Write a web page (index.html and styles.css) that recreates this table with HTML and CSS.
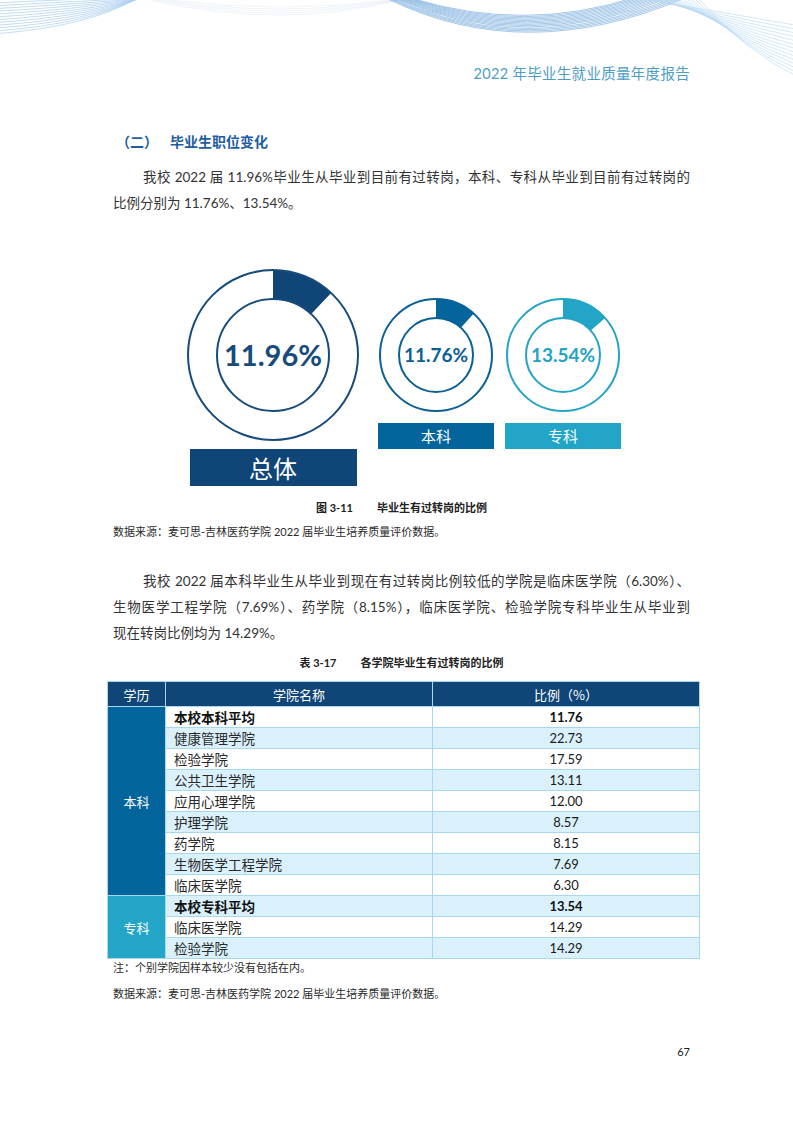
FILE: index.html
```html
<!DOCTYPE html>
<html lang="zh-CN">
<head>
<meta charset="utf-8">
<title>2022 年毕业生就业质量年度报告</title>
<link rel="stylesheet" href="styles.css">
</head>
<body>
<div class="page">
  <header class="top">
    <svg class="waves" width="793" height="90" viewBox="0 0 793 90" aria-hidden="true">
      <g class="w-left" fill="none">
        <path d="M-5 3 Q90 -2 148 -2"/>
        <path d="M-5 5.8 Q90 0.6 147 -2"/>
        <path d="M-5 8.6 Q90 3.2 146 -2"/>
        <path d="M-5 11.4 Q90 5.8 145 -2"/>
        <path d="M-5 14.2 Q90 8.4 144 -2"/>
        <path d="M-5 17 Q90 11 143 -2"/>
        <path d="M-5 19.8 Q90 13.6 142 -2"/>
        <path d="M-5 22.6 Q90 16.2 141 -2"/>
        <path d="M-5 25.4 Q90 18.8 140 -2"/>
        <path d="M-5 28.2 Q90 21.4 139 -2"/>
        <path d="M-5 31 Q90 24 138 -2"/>
        <path d="M-5 33.8 Q90 26.6 137 -2"/>
      </g>
      <g class="w-faint" fill="none">
        <path d="M150 0 Q280 30 400 0"/>
        <path d="M155 0 Q280 26 398 0"/>
        <path d="M160 0 Q280 22 396 0"/>
        <path d="M165 0 Q280 18 394 0"/>
        <path d="M170 0 Q280 14 392 0"/>
      </g>
      <g class="w-mid" fill="none">
        <path d="M388 -1 Q525 66 685 -2"/>
        <path d="M390 -1 Q525 63.4 681 -2"/>
        <path d="M392 -1 Q525 60.8 677 -2"/>
        <path d="M394 -1 Q525 58.2 673 -2"/>
        <path d="M396 -1 Q525 55.6 669 -2"/>
        <path d="M398 -1 Q525 53 665 -2"/>
        <path d="M400 -1 Q525 50.4 661 -2"/>
        <path d="M402 -1 Q525 47.8 657 -2"/>
        <path d="M404 -1 Q525 45.2 653 -2"/>
        <path d="M406 -1 Q525 42.6 649 -2"/>
        <path d="M408 -1 Q525 40 645 -2"/>
        <path d="M410 -1 Q525 37.4 641 -2"/>
        <path d="M412 -1 Q525 34.8 637 -2"/>
        <path d="M414 -1 Q525 32.2 633 -2"/>
      </g>
      <g class="w-right" fill="none">
        <path d="M648 0 Q722 12 800 26"/>
        <path d="M652 0 Q722 15 800 30"/>
        <path d="M656 0 Q722 18 800 34"/>
        <path d="M660 0 Q724 21 800 38"/>
        <path d="M664 0 Q726 24 800 42"/>
        <path d="M668 0 Q728 27 800 46"/>
        <path d="M672 0 Q730 30 800 50"/>
        <path d="M676 0 Q732 33 800 54"/>
        <path d="M680 0 Q734 36 800 58"/>
        <path d="M684 0 Q736 39 800 62"/>
        <path d="M688 0 Q738 42 800 66"/>
        <path d="M692 0 Q740 45 800 70"/>
        <path d="M696 0 Q742 48 800 74"/>
        <path d="M700 0 Q744 51 800 78"/>
      </g>
    </svg>
    <div class="doc-title">2022 年毕业生就业质量年度报告</div>
  </header>

  <h2 class="section">（二）<span class="section-name">毕业生职位变化</span></h2>

  <p class="para">
    <span class="line first">我校 2022 届 11.96%毕业生从毕业到目前有过转岗，本科、专科从毕业到目前有过转岗的</span>
    <span class="line last">比例分别为 11.76%、13.54%。</span>
  </p>

  <div class="charts">
    <div class="chart big">
      <svg class="donut" width="174" height="174" viewBox="0 0 174 174">
        <path class="seg-total" d="M87 2 A85 85 0 0 1 145.06 24.92 L125.25 46.10 A56 56 0 0 0 87 31 Z"/>
        <circle class="ring-total" cx="87" cy="87" r="85"/>
        <circle class="ring-total" cx="87" cy="87" r="56"/>
        <text class="pct pct-big" x="87" y="98" text-anchor="middle">11.96%</text>
      </svg>
      <div class="tag tag-big">总体</div>
    </div>
    <div class="chart mid">
      <svg class="donut" width="116" height="116" viewBox="0 0 116 116">
        <path class="seg-bk" d="M58 2 A56 56 0 0 1 95.72 16.61 L82.92 30.65 A37 37 0 0 0 58 21 Z"/>
        <circle class="ring-bk" cx="58" cy="58" r="56"/>
        <circle class="ring-bk" cx="58" cy="58" r="37"/>
        <text class="pct pct-mid pct-bk" x="58" y="65" text-anchor="middle">11.76%</text>
      </svg>
      <div class="tag tag-bk">本科</div>
    </div>
    <div class="chart mid last">
      <svg class="donut" width="116" height="116" viewBox="0 0 116 116">
        <path class="seg-zk" d="M58 2 A56 56 0 0 1 100.10 21.07 L85.81 33.60 A37 37 0 0 0 58 21 Z"/>
        <circle class="ring-zk" cx="58" cy="58" r="56"/>
        <circle class="ring-zk" cx="58" cy="58" r="37"/>
        <text class="pct pct-mid pct-zk" x="58" y="65" text-anchor="middle">13.54%</text>
      </svg>
      <div class="tag tag-zk">专科</div>
    </div>
  </div>

  <p class="caption">图 3-11<span class="cap-gap"></span>毕业生有过转岗的比例</p>
  <p class="source">数据来源：麦可思-吉林医药学院 2022 届毕业生培养质量评价数据。</p>

  <p class="para para2">
    <span class="line first">我校 2022 届本科毕业生从毕业到现在有过转岗比例较低的学院是临床医学院（6.30%）、</span>
    <span class="line">生物医学工程学院（7.69%）、药学院（8.15%），临床医学院、检验学院专科毕业生从毕业到</span>
    <span class="line last">现在转岗比例均为 14.29%。</span>
  </p>

  <p class="caption caption-table">表 3-17<span class="cap-gap"></span>各学院毕业生有过转岗的比例</p>

  <table class="data">
    <colgroup>
      <col class="c1"><col class="c2"><col class="c3">
    </colgroup>
    <thead>
      <tr><th>学历</th><th>学院名称</th><th>比例（%）</th></tr>
    </thead>
    <tbody>
      <tr class="odd avg"><td class="lvl lvl-bk" rowspan="9">本科</td><td class="name">本校本科平均</td><td class="val">11.76</td></tr>
      <tr class="even"><td class="name">健康管理学院</td><td class="val">22.73</td></tr>
      <tr class="odd"><td class="name">检验学院</td><td class="val">17.59</td></tr>
      <tr class="even"><td class="name">公共卫生学院</td><td class="val">13.11</td></tr>
      <tr class="odd"><td class="name">应用心理学院</td><td class="val">12.00</td></tr>
      <tr class="even"><td class="name">护理学院</td><td class="val">8.57</td></tr>
      <tr class="odd"><td class="name">药学院</td><td class="val">8.15</td></tr>
      <tr class="even"><td class="name">生物医学工程学院</td><td class="val">7.69</td></tr>
      <tr class="odd"><td class="name">临床医学院</td><td class="val">6.30</td></tr>
      <tr class="even avg"><td class="lvl lvl-zk" rowspan="3">专科</td><td class="name">本校专科平均</td><td class="val">13.54</td></tr>
      <tr class="odd"><td class="name">临床医学院</td><td class="val">14.29</td></tr>
      <tr class="even"><td class="name">检验学院</td><td class="val">14.29</td></tr>
    </tbody>
  </table>

  <p class="note">注：个别学院因样本较少没有包括在内。</p>
  <p class="source source2">数据来源：麦可思-吉林医药学院 2022 届毕业生培养质量评价数据。</p>

  <div class="page-num">67</div>
</div>
</body>
</html>
```

FILE: styles.css
```css
* { box-sizing: border-box; }
html, body { margin: 0; padding: 0; background: #fff; }
body {
  font-family: Lato, "Noto Sans CJK SC", sans-serif;
  color: #2a2a2a;
}
.page {
  width: 793px;
  min-height: 1122px;
  padding: 0 103px 0 113px;
  position: relative;
  overflow: hidden;
}
.top {
  height: 90px;
  position: relative;
  margin: 0 -103px 0 -113px;
  padding: 63px 103px 0 113px;
}
.waves { position: absolute; left: 0; top: 0; }
.w-left path { stroke: #a9cdee; stroke-width: 0.7; }
.w-faint path { stroke: #e4eef9; stroke-width: 0.6; }
.w-mid path { stroke: #7fb0de; stroke-width: 0.7; }
.w-right path { stroke: #b6d8f2; stroke-width: 0.6; }
.doc-title {
  position: relative;
  text-align: right;
  font-size: 14.5px;
  line-height: 22px;
  color: #4d9cc4;
  letter-spacing: 0.3px;
}
.section {
  margin: 41px 0 0 3px;
  font-size: 14px;
  line-height: 22px;
  font-weight: 700;
  color: #1e5e9f;
}
.section-name { margin-left: 12px; }
.para {
  margin: 12px 0 0 0;
  font-size: 13.5px;
  line-height: 25.5px;
  color: #333;
}
.para .line {
  display: block;
  white-space: nowrap;
  text-align: justify;
  text-align-last: justify;
}
.para .line.first { text-indent: 30px; }
.para .line.last { text-align-last: left; }
.para2 { margin-top: 27px; line-height: 26px; }

.charts {
  margin: 52px 0 0 73px;
  display: flex;
  align-items: flex-start;
}
.chart { display: flex; flex-direction: column; align-items: center; }
.chart.big { width: 174px; }
.chart.mid { width: 116px; padding-top: 29px; margin-left: 18px; }
.chart.mid.last { margin-left: 11px; }
.donut { display: block; }
.donut circle { fill: none; stroke-width: 2; }
.ring-total { stroke: #174b7c; }
.seg-total { fill: #0f4677; }
.ring-bk { stroke: #0b6197; }
.seg-bk { fill: #03659b; }
.ring-zk { stroke: #25a4c6; }
.seg-zk { fill: #22a5c6; }
.pct { font-family: Lato, sans-serif; font-weight: 700; }
.pct-big { font-size: 29px; fill: #174b7c; }
.pct-mid { font-size: 19px; }
.pct-bk { fill: #0b5f93; }
.pct-zk { fill: #23a3c4; }
.tag {
  color: #fff;
  text-align: center;
  font-family: "Noto Sans CJK SC", sans-serif;
}
.tag-big {
  margin-top: 7px;
  width: 167px;
  height: 37px;
  line-height: 37px;
  font-size: 24px;
  background: #0f4677;
}
.tag-bk, .tag-zk {
  margin-top: 10px;
  width: 116px;
  height: 26px;
  line-height: 26px;
  font-size: 15px;
}
.tag-bk { background: #03659b; }
.tag-zk { background: #22a5c6; }

.caption {
  margin: 13px 0 0 0;
  text-align: center;
  font-size: 11px;
  line-height: 18px;
  font-weight: 700;
  color: #222;
}
.cap-gap { display: inline-block; width: 24px; }
.source {
  margin: 6px 0 0 0;
  font-size: 11px;
  line-height: 18px;
  color: #2a2a2a;
}
.caption-table { margin-top: 8px; }

.data {
  margin: 9px 0 0 -6px;
  width: 592px;
  border-collapse: collapse;
  table-layout: fixed;
  font-size: 13px;
}
.c1 { width: 58px; }
.c2 { width: 267px; }
.c3 { width: 267px; }
.data th, .data td {
  border: 1px solid #a6d9f1;
  padding: 0;
}
.data th {
  height: 25px;
  background: #0f4677;
  color: #fff;
  font-weight: 400;
  font-size: 13px;
  font-family: "Noto Sans CJK SC", sans-serif;
  text-align: center;
}
.data td { height: 21px; line-height: 19px; }
.data tr.odd td { background: #ffffff; }
.data tr.even td { background: #daf1fc; }
.data td.lvl {
  color: #fff;
  text-align: center;
  font-family: "Noto Sans CJK SC", sans-serif;
  font-size: 13px;
}
.data tr td.lvl-bk { background: #03659b; }
.data tr td.lvl-zk { background: #22a5c6; }
.data td.name {
  padding-left: 8px;
  font-family: "Noto Sans CJK SC", sans-serif;
  font-size: 13.5px;
  color: #2a2a2a;
}
.data td.val {
  text-align: center;
  font-family: Lato, sans-serif;
  font-size: 13px;
  color: #1a1a1a;
}
.data tr.avg td.name, .data tr.avg td.val { font-weight: 700; color: #111; }

.note {
  margin: 0;
  font-size: 11px;
  line-height: 18px;
}
.source2 { margin-top: 8px; }
.page-num {
  margin-top: 40px;
  text-align: right;
  font-size: 11px;
  line-height: 18px;
  color: #222;
}
```
